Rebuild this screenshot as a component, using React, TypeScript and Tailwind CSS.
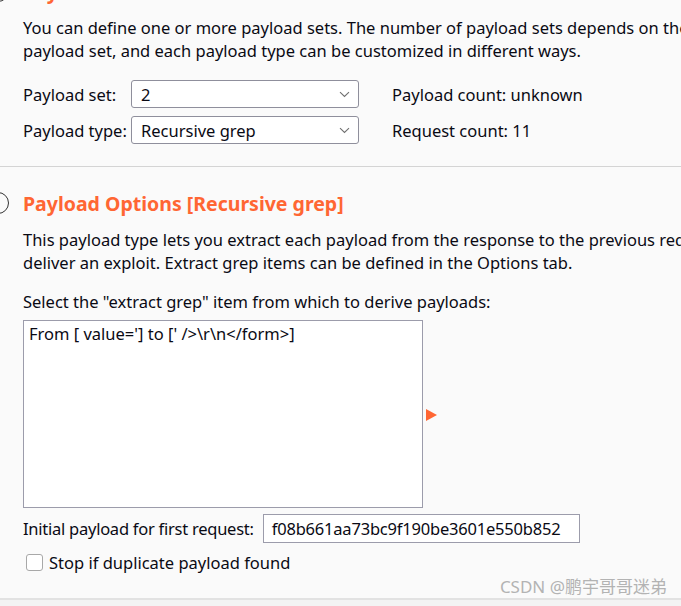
const font = { fontFamily: '"Noto Sans", "Noto Sans CJK SC", sans-serif' }

function HelpCircle() {
  return (
    <div className="w-[22px] h-[22px] rounded-full border-[1.5px] border-[#333] ml-[-36px] mr-[14px] flex-shrink-0 bg-[#fafafa]" />
  )
}

function Chevron() {
  return (
    <svg width="11" height="7" viewBox="0 0 11 7" className="text-[#707070]">
      <path d="M1 1.2 L5.5 5.5 L10 1.2" fill="none" stroke="currentColor" strokeWidth="1.1" />
    </svg>
  )
}

function Select({ value }: { value: string }) {
  return (
    <div className="w-[228px] h-[28px] bg-white border border-[#8f8f9c] rounded-[3px] flex items-center justify-between pl-[9px] pr-[8px]">
      <span>{value}</span>
      <Chevron />
    </div>
  )
}

export default function App() {
  return (
    <div
      className="w-[681px] h-[606px] bg-[#fafafa] overflow-hidden flex flex-col text-[16.5px] leading-[23px] text-[#0a0a14] whitespace-nowrap"
      style={font}
    >
      {/* Payload Sets section (scrolled, title cut off) */}
      <section className="flex flex-col px-[23px] h-[166px]">
        <div className="flex items-center h-[22px] mt-[-20px]">
          <HelpCircle />
          <span className="text-[19.5px] font-bold text-[#ff6633]">Payload Sets</span>
        </div>
        <p className="mt-[14px]">
          You can define one or more payload sets. The number of payload sets depends on the attack type defined in the Positions tab.
        </p>
        <p>payload set, and each payload type can be customized in different ways.</p>
        <div className="mt-[18px] flex items-center h-[28px]">
          <span className="w-[108px]">Payload set:</span>
          <Select value="2" />
          <span className="ml-[33px]">Payload count: unknown</span>
        </div>
        <div className="mt-[8px] flex items-center h-[28px]">
          <span className="w-[108px]">Payload type:</span>
          <Select value="Recursive grep" />
          <span className="ml-[33px]">Request count: 11</span>
        </div>
      </section>

      <div className="border-t border-[#d4d4d4]" />

      {/* Payload Options section */}
      <section className="flex flex-col px-[23px] pt-[25px] h-[431px]">
        <div className="flex items-center h-[22px]">
          <HelpCircle />
          <span className="text-[19.5px] font-bold text-[#ff6633]">Payload Options [Recursive grep]</span>
        </div>
        <p className="mt-[14px]">
          This payload type lets you extract each payload from the response to the previous request in the attack. This can be used to
        </p>
        <p>deliver an exploit. Extract grep items can be defined in the Options tab.</p>
        <p className="mt-[16px]">Select the "extract grep" item from which to derive payloads:</p>
        <div className="mt-[7px] flex items-center">
          <div className="w-[400px] h-[188px] bg-white border border-[#9c9cab] px-[5px] pt-[1px]">
            From [ value='] to [' /&gt;\r\n&lt;/form&gt;]
          </div>
          <svg width="11" height="12" viewBox="0 0 11 12" className="ml-[3px] mt-[1px]">
            <polygon points="0,0 11,6 0,12" fill="#ff6633" />
          </svg>
        </div>
        <div className="mt-[6px] flex items-center h-[29px]">
          <span className="tracking-[-0.25px]">Initial payload for first request:</span>
          <div className="ml-[9px] w-[317px] h-[29px] bg-white border border-[#9c9cab] flex items-center pl-[8px] tracking-[-0.2px]">
            f08b661aa73bc9f190be3601e550b852
          </div>
        </div>
        <label className="mt-[7px] flex items-center h-[26px] pl-[3px]">
          <span className="w-[17px] h-[17px] rounded-[3px] border border-[#a8a8a8] bg-white" />
          <span className="ml-[6px]">Stop if duplicate payload found</span>
        </label>
        <div className="mt-[0px] self-end mr-[-9px] text-[#b3b3b3] text-[17px]">CSDN @鹏宇哥哥迷弟</div>
      </section>

      <div className="border-t-2 border-[#e2e2e2]" />
      <div className="flex-1 bg-[#f3f3f3]" />
    </div>
  )
}
